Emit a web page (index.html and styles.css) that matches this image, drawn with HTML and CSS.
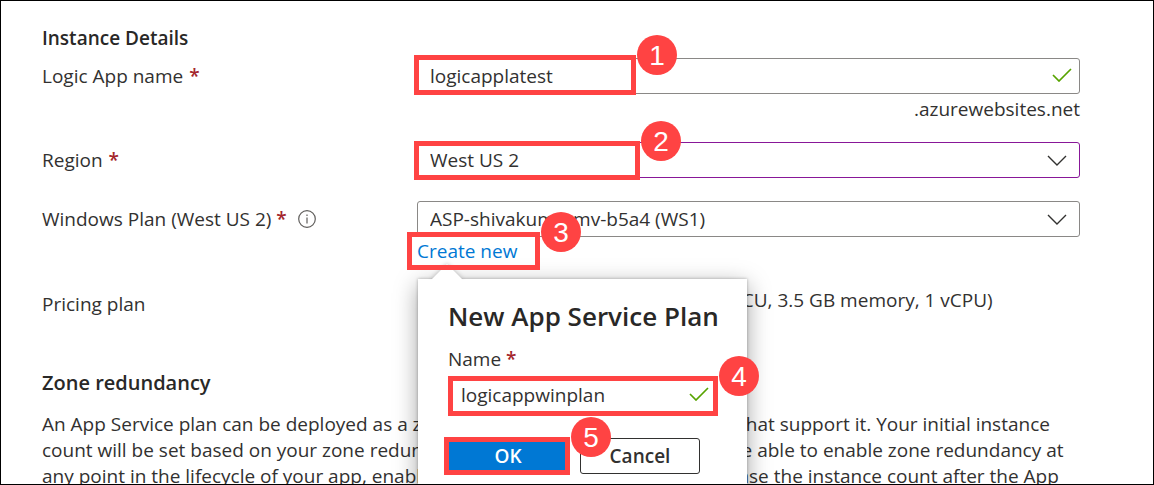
FILE: index.html
```html
<!DOCTYPE html>
<html lang="en">
<head>
<meta charset="utf-8">
<title>Create Logic App</title>
<link rel="stylesheet" href="styles.css">
</head>
<body>
<main class="page">
  <h2 class="section-title">Instance Details</h2>

  <div class="row row-name">
    <label class="label" for="app-name">Logic App name <span class="required">*</span></label>
    <div class="field">
      <input class="control" id="app-name" type="text" value="logicapplatest">
      <svg class="check" viewBox="0 0 20 14" aria-hidden="true"><path d="M1 7l6 6L19 1"/></svg>
      <span class="callout callout-1"><span class="badge">1</span></span>
    </div>
    <div class="suffix">.azurewebsites.net</div>
  </div>

  <div class="row row-region">
    <label class="label" for="region">Region <span class="required">*</span></label>
    <div class="field">
      <select class="control control-edited" id="region"><option>West US 2</option></select>
      <svg class="chevron" viewBox="0 0 20 12" aria-hidden="true"><path d="M1 1l9 9 9-9"/></svg>
      <span class="callout callout-2"><span class="badge">2</span></span>
    </div>
  </div>

  <div class="row row-plan">
    <div class="label">
      <label for="plan">Windows Plan (West US 2) <span class="required">*</span></label>
      <svg class="info" viewBox="0 0 18 18" aria-hidden="true"><circle cx="9" cy="9" r="8.3"/><path d="M9 7.5v6M9 4.6v1.4"/></svg>
    </div>
    <div class="field">
      <select class="control" id="plan"><option>ASP-shivakumarmv-b5a4 (WS1)</option></select>
      <svg class="chevron" viewBox="0 0 20 12" aria-hidden="true"><path d="M1 1l9 9 9-9"/></svg>
    </div>
    <div class="create">
      <a class="link" href="#new-plan">Create new</a>
      <section class="popup" id="new-plan" role="dialog" aria-labelledby="popup-title">
        <h3 class="popup-title" id="popup-title">New App Service Plan</h3>
        <label class="popup-label" for="plan-name">Name <span class="required">*</span></label>
        <div class="field">
          <input class="control popup-input" id="plan-name" type="text" value="logicappwinplan">
          <svg class="check" viewBox="0 0 20 14" aria-hidden="true"><path d="M1 7l6 6L19 1"/></svg>
          <span class="callout callout-4"><span class="badge">4</span></span>
        </div>
        <div class="actions">
          <div class="action">
            <button class="button primary" type="button">OK</button>
            <span class="callout callout-5"><span class="badge">5</span></span>
          </div>
          <button class="button secondary" type="button">Cancel</button>
        </div>
      </section>
      <span class="callout callout-3"><span class="badge">3</span></span>
    </div>
  </div>

  <div class="row row-pricing">
    <div class="label">Pricing plan</div>
    <div class="value">Workflow Standard WS1 (210 Total ACU, 3.5 GB memory, 1 vCPU)</div>
  </div>

  <h2 class="section-title zone-title">Zone redundancy</h2>
  <p class="text">An App Service plan can be deployed as a zone redundant service with regions that support it. Your initial instance<br>count will be set based on your zone redundancy selection. You will then only be able to enable zone redundancy at<br>any point in the lifecycle of your app, enabling zone redundancy may also increase the instance count after the App</p>
</main>
</body>
</html>
```

FILE: styles.css
```css
* {
  box-sizing: border-box;
}

body {
  margin: 0;
  background: #fff;
  color: #323130;
  font-family: "Open Sans", "Noto Sans", sans-serif;
  font-size: 19px;
  line-height: 26px;
}

.page {
  height: 100vh;
  overflow: hidden;
  border: 1px solid #000;
  padding: 24px 73px 0 41px;
}

.section-title {
  margin: 0;
  color: #292827;
  font-size: 19px;
  font-weight: 600;
  line-height: 26px;
}

.row {
  display: grid;
  grid-template-columns: 375px minmax(0, 1fr);
}

.label {
  display: flex;
  align-items: center;
  gap: 6px;
  height: 36px;
  white-space: nowrap;
}

.required {
  color: #a4262c;
  font-weight: 600;
}

.field {
  position: relative;
}

.control {
  display: block;
  width: 100%;
  height: 36px;
  margin: 0;
  padding: 0 12px;
  border: 1px solid #8a8886;
  border-radius: 3px;
  background: #fff;
  color: inherit;
  font: inherit;
  appearance: none;
  outline: none;
}

.control-edited {
  border-color: #881798;
}

.check {
  position: absolute;
  top: 10px;
  right: 8px;
  width: 20px;
  height: 14px;
  fill: none;
  stroke: #57a300;
  stroke-width: 1.7;
}

.chevron {
  position: absolute;
  top: 13px;
  right: 13px;
  width: 20px;
  height: 12px;
  fill: none;
  stroke: #323130;
  stroke-width: 1.4;
  pointer-events: none;
}

.info {
  width: 18px;
  height: 18px;
  margin-left: 5px;
  fill: none;
  stroke: #605e5c;
  stroke-width: 1.2;
}

.row-name {
  margin-top: 7px;
}

.suffix {
  grid-column: 2;
  padding-top: 2px;
  text-align: right;
}

.row-region {
  margin-top: 20px;
}

.row-plan {
  margin-top: 23px;
}

.create {
  position: relative;
  grid-column: 2;
  padding-top: 1px;
}

.link {
  color: #0078d4;
  text-decoration: none;
}

.row-pricing {
  margin-top: 22px;
}

.value {
  padding: 1px 0 0 2px;
}

.zone-title {
  margin-top: 48px;
  font-size: 20px;
}

.text {
  margin: 15px 0 0;
  white-space: nowrap;
}

.popup {
  position: absolute;
  top: 42px;
  left: 1px;
  z-index: 1;
  width: 329px;
  height: 230px;
  padding: 19px 30px 0;
  background: #fff;
  box-shadow: 0 6px 22px rgba(0, 0, 0, 0.36), 0 0 3px rgba(0, 0, 0, 0.3);
}

.popup::before {
  content: "";
  position: absolute;
  top: -15px;
  left: 13px;
  border: 16px solid transparent;
  border-top: 0;
  border-bottom-color: #fff;
  filter: drop-shadow(0 -1px 2px rgba(0, 0, 0, 0.2));
  clip-path: inset(-6px -6px 0 -6px);
}

.popup-title {
  margin: 0;
  color: #292827;
  font-size: 26px;
  font-weight: 600;
  line-height: 36px;
  white-space: nowrap;
}

.popup-label {
  display: block;
  margin-top: 12px;
}

.popup-input {
  margin-top: 5px;
}

.actions {
  display: flex;
  gap: 12px;
  margin-top: 25px;
}

.action {
  position: relative;
}

.button {
  display: block;
  width: 120px;
  height: 36px;
  padding: 0;
  border-radius: 3px;
  font: inherit;
  font-weight: 600;
  line-height: 26px;
}

.primary {
  border: 1px solid #0078d4;
  background: #0078d4;
  color: #fff;
}

.secondary {
  border: 1px solid #323130;
  background: #fff;
  color: #323130;
}

.callout {
  position: absolute;
  z-index: 2;
  border: 5px solid #ff4343;
  pointer-events: none;
}

.badge {
  position: absolute;
  top: -25px;
  left: calc(100% + 6px);
  width: 40px;
  height: 40px;
  border-radius: 50%;
  background: #ff4343;
  color: #fff;
  font-family: "Liberation Sans", Arial, sans-serif;
  font-size: 28px;
  line-height: 41px;
  text-align: center;
}

.callout-1 {
  top: -3px;
  left: -3px;
  width: 222px;
  height: 40px;
}

.callout-2 {
  top: -1px;
  left: -3px;
  width: 226px;
  height: 39px;
}

.callout-3 {
  top: -5px;
  left: -10px;
  width: 133px;
  height: 38px;
}

.callout-4 {
  top: -1px;
  left: 0;
  width: 270px;
  height: 40px;
}

.callout-5 {
  top: -1px;
  left: -4px;
  width: 126px;
  height: 38px;
}
```
